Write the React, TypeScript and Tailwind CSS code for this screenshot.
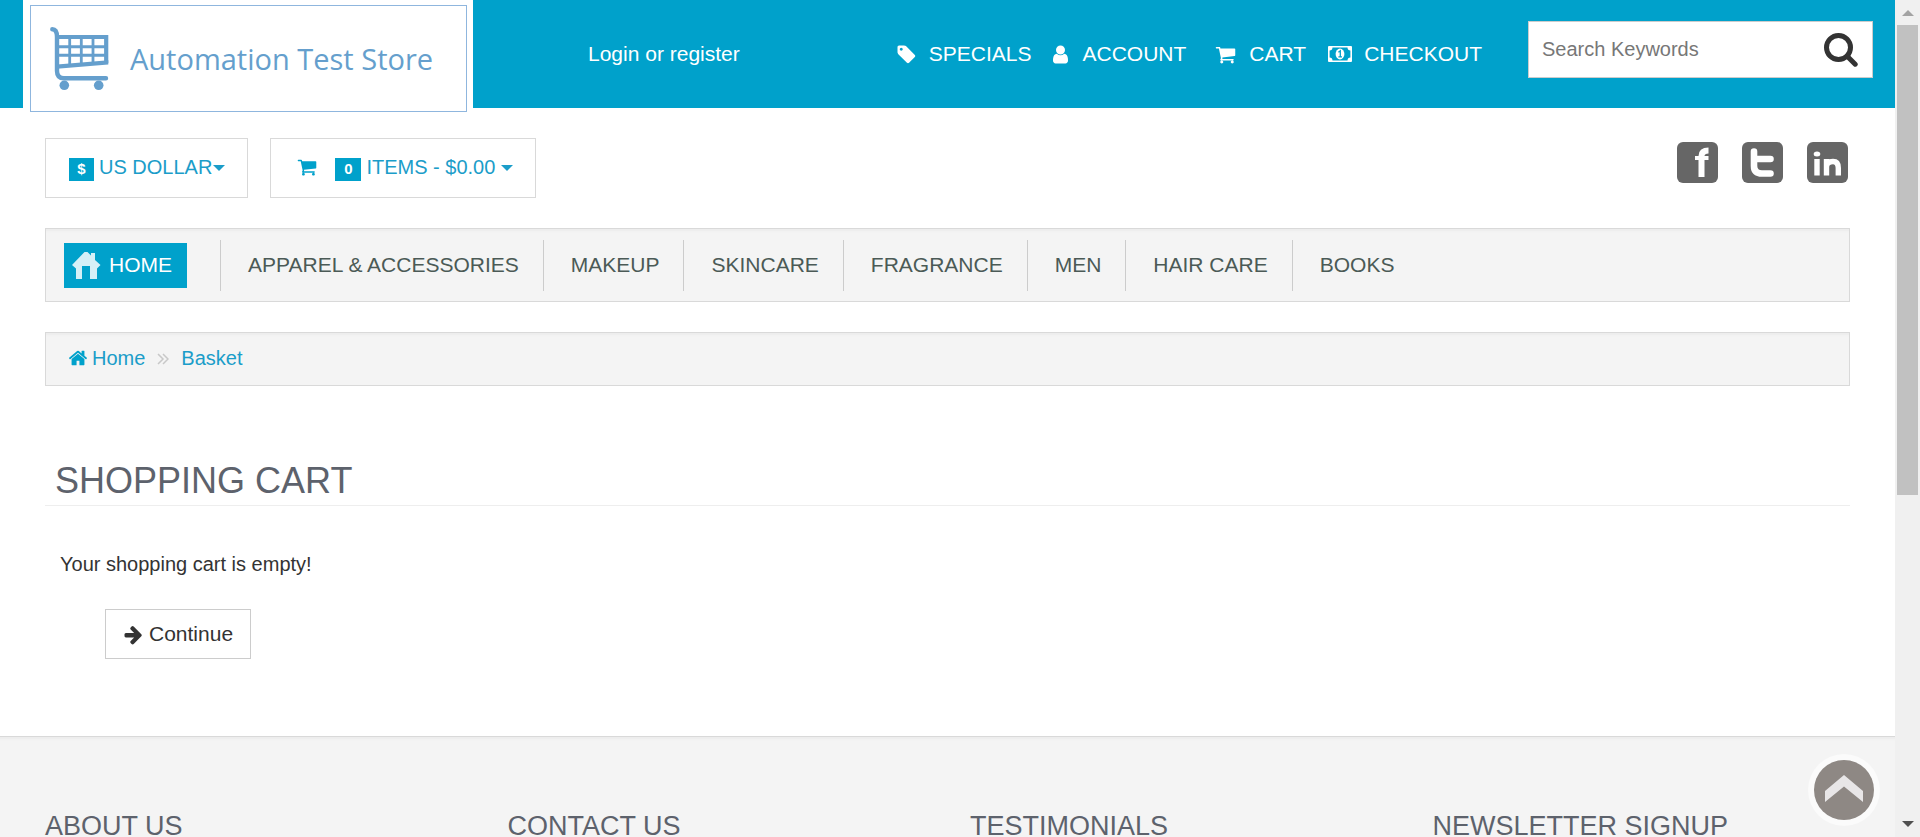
import React from "react";

const paths = {
  cart: "M704 1536q0 52-38 90t-90 38-90-38-38-90 38-90 90-38 90 38 38 90zm896 0q0 52-38 90t-90 38-90-38-38-90 38-90 90-38 90 38 38 90zm128-1088v512q0 24-16.5 42.5t-40.5 21.5l-1044 122q13 60 13 70 0 16-24 64h920q26 0 45 19t19 45-19 45-45 19h-1024q-26 0-45-19t-19-45q0-11 8-31.5t16-36 21.5-40 15.5-29.5l-177-823h-204q-26 0-45-19t-19-45 19-45 45-19h256q16 0 28.5 6.5t19.5 15.5 13 24.5 8 26 5.5 29.5 4.5 26h1201q26 0 45 19t19 45z",
  user: "M1536 1399q0 109-62.5 187t-150.5 78h-854q-88 0-150.5-78t-62.5-187q0-85 8.5-160.5t31.5-152 58.5-131 94-89 134.5-34.5q131 128 313 128t313-128q76 0 134.5 34.5t94 89 58.5 131 31.5 152 8.5 160.5zm-256-887q0 159-112.5 271.5t-271.5 112.5-271.5-112.5-112.5-271.5 112.5-271.5 271.5-112.5 271.5 112.5 112.5 271.5z",
  tag: "M576 448q0-53-37.5-90.5t-90.5-37.5-90.5 37.5-37.5 90.5 37.5 90.5 90.5 37.5 90.5-37.5 37.5-90.5zm1067 576q0 53-37 90l-491 492q-39 37-91 37-53 0-90-37l-715-716q-38-37-64.5-101t-26.5-117v-416q0-52 38-90t90-38h416q53 0 117 26.5t102 64.5l715 714q37 39 37 91z",
  home: "M1472 992v480q0 26-19 45t-45 19h-384v-384h-256v384h-384q-26 0-45-19t-19-45v-480q0-1 .5-3t.5-3l575-474 575 474q1 2 1 6zm223-69l-62 74q-8 9-21 11h-3q-13 0-21-7l-692-577-692 577q-12 8-24 7-13-2-21-11l-62-74q-8-10-7-23.5t11-21.5l719-599q32-26 76-26t76 26l244 204v-195q0-14 9-23t23-9h192q14 0 23 9t9 23v408l219 182q10 8 11 21.5t-7 23.5z",
  arrow: "M1600 960q0 54-37 91l-651 651q-39 37-91 37-51 0-90-37l-75-75q-38-38-38-91t38-91l293-293h-704q-52 0-84.5-37.5t-32.5-90.5v-128q0-53 32.5-90.5t84.5-37.5h704l-293-294q-38-36-38-90t38-90l75-75q38-38 90-38 53 0 91 38l651 651q37 35 37 90z",
};

function Icon({ d, viewBox = "0 0 1792 1792", className }: { d: string; viewBox?: string; className: string }) {
  return (
    <svg viewBox={viewBox} fill="currentColor" className={className} aria-hidden="true">
      <path d={d} />
    </svg>
  );
}

function MoneyIcon() {
  return (
    <svg viewBox="0 0 24 16" className="h-4 w-6" aria-hidden="true">
      <rect width="24" height="16" rx="1" fill="#fff" />
      <path d="M4.5 1.6h15a3 3 0 0 0 2.9 2.9v7a3 3 0 0 0-2.9 2.9h-15a3 3 0 0 0-2.9-2.9v-7a3 3 0 0 0 2.9-2.9z" fill="#00a1cb" />
      <ellipse cx="12" cy="8" rx="4.4" ry="5.4" fill="#fff" />
      <path d="M10.4 6.2 12.3 4.8V10.6M10.4 10.9h3.6" fill="none" stroke="#00a1cb" strokeWidth="1.3" />
    </svg>
  );
}

function SearchIcon() {
  return (
    <svg viewBox="0 0 34 34" className="h-[34px] w-[34px]" fill="none" stroke="currentColor" strokeWidth="5" aria-hidden="true">
      <circle cx="14.5" cy="14.5" r="12" />
      <path d="M23 23 31.200 31.200" strokeLinecap="round" />
    </svg>
  );
}

function Caret() {
  return (
    <svg viewBox="0 0 12 6" className="h-1.5 w-3" fill="currentColor" aria-hidden="true">
      <path d="M0 0h12L6 6z" />
    </svg>
  );
}

function LogoCart() {
  return (
    <svg viewBox="0 0 60 64" className="h-16 w-[60px]" fill="none" stroke="#659fcd" aria-hidden="true">
      <path d="M3.300 2.200C7 2.200 8 5 8 10V44Q8 51.300 15 51.300H57" strokeWidth="4.4" strokeLinecap="round" strokeLinejoin="round" />
      <path d="M8 10H57.200V36" strokeWidth="4.2" />
      <path d="M8 19.700H57M8 28.200H57" strokeWidth="3" />
      <path d="M20.700 10V39M32.300 10V38M44 10V37" strokeWidth="2.8" />
      <path d="M8 37.400 59.300 33.300V37.600L8 41.800z" fill="#659fcd" stroke="none" />
      <circle cx="15.300" cy="58.300" r="4.8" fill="#659fcd" stroke="none" />
      <circle cx="49.700" cy="58.300" r="4.8" fill="#659fcd" stroke="none" />
    </svg>
  );
}

const socials = [
  {
    name: "Facebook",
    art: (
      <g fill="none" stroke="#fff">
        <path d="M24.500 35V14Q24.500 8.500 31.500 8.500" strokeWidth="6" />
        <path d="M18 16H31.500" strokeWidth="4" />
      </g>
    ),
  },
  {
    name: "Twitter",
    art: <path d="M12 9.500V24Q12 31.500 20 31.500H28.500M12 17H28.500" fill="none" stroke="#fff" strokeWidth="6.600" strokeLinecap="round" strokeLinejoin="round" />,
  },
  {
    name: "LinkedIn",
    art: (
      <g>
        <ellipse cx="10" cy="12" rx="3.300" ry="2.500" fill="#fff" />
        <path d="M10 17V33.500M19.500 33.500V17M19.500 25Q19.500 19.500 26 19.500Q31.300 19.500 31.300 26V33.500" fill="none" stroke="#fff" strokeWidth="5.400" />
      </g>
    ),
  },
];

const categories = ["APPAREL & ACCESSORIES", "MAKEUP", "SKINCARE", "FRAGRANCE", "MEN", "HAIR CARE", "BOOKS"];
const footerTitles = ["ABOUT US", "CONTACT US", "TESTIMONIALS", "NEWSLETTER SIGNUP"];

function Header() {
  return (
    <header className="flex h-[108px] items-start bg-[#00a1cb]">
      <a href="#" className="ml-[23px] h-[114px] w-[450px] shrink-0 bg-white pl-[7px] pt-[5px]">
        <span className="flex h-[107px] w-[437px] items-center border border-[#8fb6de] pl-[18px] text-[#659fcd]">
          <LogoCart />
          <span className="ml-[21px] whitespace-nowrap font-['Open_Sans',sans-serif] text-[29px] leading-8">Automation Test Store</span>
        </span>
      </a>
      <a href="#" className="ml-[115px] mt-10 whitespace-nowrap text-[21px] leading-7 text-white">Login or register</a>
      <nav className="ml-auto mt-10 flex whitespace-nowrap text-[21px] leading-7 text-white">
        <a href="#" className="flex items-center">
          <Icon d={paths.tag} className="mr-3 h-[21px] w-[21px]" />SPECIALS
        </a>
        <a href="#" className="ml-[18px] flex items-center">
          <Icon d={paths.user} className="mr-3 h-[21px] w-[21px]" />ACCOUNT
        </a>
        <a href="#" className="ml-[29px] flex items-center">
          <Icon d={paths.cart} className="mr-[13px] h-[21px] w-[21px]" />CART
        </a>
        <a href="#" className="ml-[22px] flex items-center">
          <span className="mr-3"><MoneyIcon /></span>CHECKOUT
        </a>
      </nav>
      <form className="ml-[46px] mr-[22px] mt-[21px] flex h-[57px] w-[345px] items-center border border-[#ccc] bg-white pl-[13px] pr-3.5">
        <input type="text" aria-label="Search Keywords" placeholder="Search Keywords" className="min-w-0 flex-1 pb-0.5 text-[20px] leading-7 text-[#555] outline-none placeholder:text-[#777]" />
        <button type="button" aria-label="Search" className="text-[#333]">
          <SearchIcon />
        </button>
      </form>
    </header>
  );
}

function Toolbar() {
  return (
    <div className="flex h-[60px] text-[20px] leading-7 text-[#1b9dc9]">
      <button type="button" className="flex items-center border border-[#d9d9d9] pb-0.5 pl-[23px] pr-[22px]">
        <span className="mr-[5px] mt-1 flex h-[23px] w-[25px] items-center justify-center bg-[#00a1cb] text-[15px] font-bold text-white">$</span>
        US DOLLAR
        <span className="ml-px mt-0.5"><Caret /></span>
      </button>
      <button type="button" className="ml-[22px] flex items-center border border-[#d9d9d9] pb-0.5 pl-[23px] pr-[22px]">
        <Icon d={paths.cart} className="ml-[3px] mr-[18px] h-5 w-5 text-[#00a1cb]" />
        <span className="mr-[5px] mt-1 flex h-[23px] w-[26px] items-center justify-center bg-[#00a1cb] text-[15px] font-bold text-white">0</span>
        ITEMS - $0.00
        <span className="ml-1.5 mt-0.5"><Caret /></span>
      </button>
      <div className="ml-auto mr-[2px] flex gap-6 pt-1">
        {socials.map((s) => (
          <a key={s.name} href="#" aria-label={s.name}>
            <svg viewBox="0 0 41 41" className="h-[41px] w-[41px]">
              <rect width="41" height="41" rx="6" fill="#666" />
              {s.art}
            </svg>
          </a>
        ))}
      </div>
    </div>
  );
}

export default function App() {
  return (
    <div className="flex h-screen overflow-hidden bg-white font-['Liberation_Sans',Arial,sans-serif] text-[#333]">
      <div className="relative flex-1 overflow-hidden">
        <Header />
        <main className="px-[45px] pt-[30px]">
          <Toolbar />

          <nav className="mt-[30px] flex h-[74px] items-center border border-[#d9d9d9] bg-[#f4f4f4] text-[21px] leading-7 text-[#4b5a56] shadow-[inset_0_4px_2px_-2px_#ececec]">
            <a href="#" className="ml-[18px] mr-[33px] flex h-[45px] w-[123px] items-center bg-[#00a1cb] pl-2 text-white">
              <Icon d="M12.500 0h3L19 3.500V1h4v7l5.500 5-3.500 3.500V27h-7V14h-8v13H4V16.500L0 13z" viewBox="0 0 29 27" className="mr-2 h-[27px] w-[29px] text-[#d5f0f7]" />
              HOME
            </a>
            {categories.map((c) => (
              <a key={c} href="#" className="flex h-[51px] items-center whitespace-nowrap border-l border-[#ccc] pl-[27px] pr-6">{c}</a>
            ))}
          </nav>

          <nav aria-label="Breadcrumb" className="mt-[30px] flex h-[54px] items-center border border-[#d9d9d9] bg-[#f4f4f4] pb-0.5 pl-[22px] text-[20px] leading-7 text-[#1b9dc9] shadow-[inset_0_4px_2px_-2px_#ececec]">
            <a href="#" className="flex items-center">
              <Icon d={paths.home} className="mr-1 h-5 w-5 text-[#00a1cb]" />Home
            </a>
            <svg viewBox="0 0 12 12" className="mx-3 mt-0.5 h-3 w-3" fill="none" stroke="#c8c8c8" strokeWidth="1.500" aria-hidden="true">
              <path d="M1 1 6 6 1 11M6 1 11 6 6 11" />
            </svg>
            <a href="#">Basket</a>
          </nav>

          <h1 className="mt-[72px] border-b border-[#eee] pb-0.5 pl-2.5 text-[36px] leading-[45px] text-[#5d626c]">SHOPPING CART</h1>
          <p className="mt-11 pl-[15px] text-[20px] leading-7">Your shopping cart is empty!</p>
          <button type="button" className="ml-[60px] mt-[31px] flex h-[50px] items-center border border-[#ccc] bg-white px-[17px] text-[21px] leading-7">
            <Icon d={paths.arrow} className="mr-[5px] h-[21px] w-[21px]" />Continue
          </button>
        </main>

        <footer className="mt-[77px] border-t border-[#d9d9d9] bg-[#f4f4f4] pl-[45px] pt-[72px] shadow-[inset_0_4px_2px_-2px_#ececec]">
          <div className="grid grid-cols-4 pb-24">
            {footerTitles.map((t) => (
              <h2 key={t} className="whitespace-nowrap text-[27px] leading-[34px] text-[#5d626c]">{t}</h2>
            ))}
          </div>
        </footer>

        <a href="#" aria-label="Back to top" className="absolute bottom-[11px] right-[15px]">
          <svg viewBox="0 0 72 72" className="h-[72px] w-[72px]">
            <circle cx="36" cy="36" r="36" fill="#fff" fillOpacity="0.6" />
            <circle cx="36" cy="36" r="30" fill="#8e8884" />
            <path d="M36 21 55 37V48L36 32.500 17 48V37z" fill="#e8e6e7" />
          </svg>
        </a>
      </div>

      <div className="flex w-[25px] flex-col items-center bg-[#f0f0f0]" aria-hidden="true">
        <svg viewBox="0 0 12 6" className="mb-[9px] mt-2.5 h-1.5 w-3" fill="#a3a3a3"><path d="M0 6 6 0l6 6z" /></svg>
        <div className="h-[470px] w-[21px] bg-[#c1c1c1]" />
        <svg viewBox="0 0 12 6" className="mb-2.5 mt-auto h-1.5 w-3" fill="#505050"><path d="M0 0h12L6 6z" /></svg>
      </div>
    </div>
  );
}
